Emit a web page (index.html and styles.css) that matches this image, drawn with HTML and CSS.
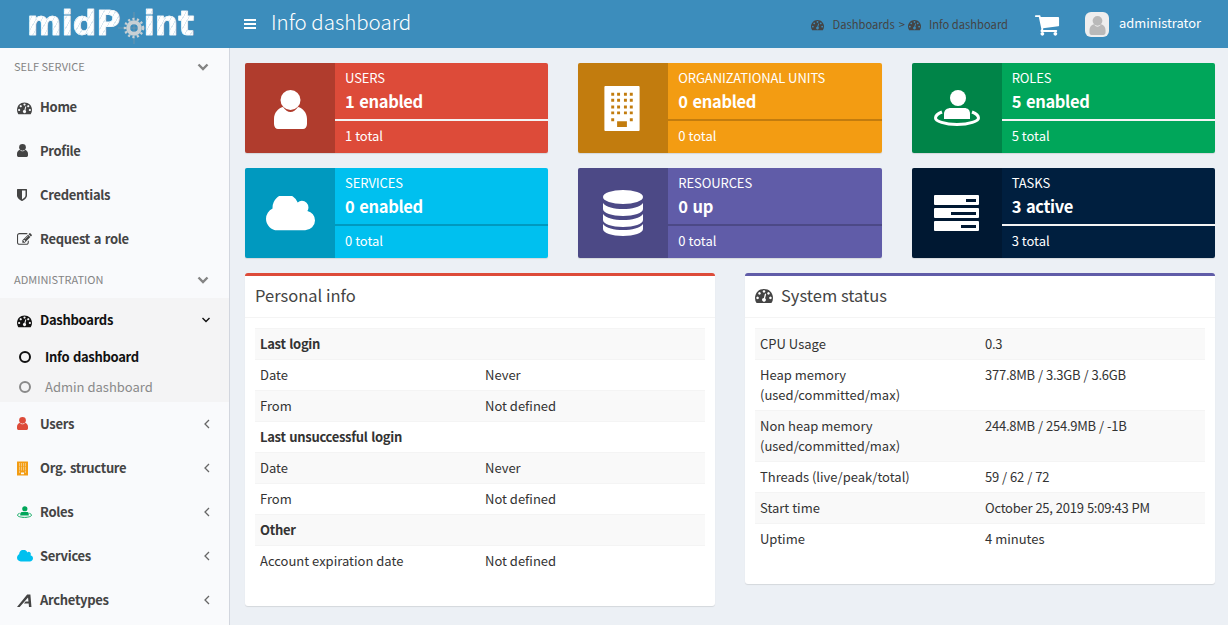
FILE: index.html
```html
<!DOCTYPE html>
<html lang="en">
<head>
<meta charset="utf-8">
<title>midPoint - Info dashboard</title>
<link rel="stylesheet" href="styles.css">
</head>
<body>
<svg class="defs" aria-hidden="true">
  <symbol id="i-gauge" viewBox="0 0 1792 1792"><path fill-rule="evenodd" d="M384 1184q0 53-37.5 90.5t-90.5 37.5-90.5-37.5-37.5-90.5 37.5-90.5 90.5-37.5 90.5 37.5 37.5 90.5zm192-448q0 53-37.5 90.5t-90.5 37.5-90.5-37.5-37.5-90.5 37.5-90.5 90.5-37.5 90.5 37.5 37.5 90.5zm428 481l101-382q6-26-7.5-48.5t-38.5-29.5-48 6.5-30 39.5l-101 382q-60 5-107 43.5t-63 98.5q-20 77 20 146t117 89 146-20 89-117q16-60-6-117t-72-91zm660-33q0 53-37.5 90.5t-90.5 37.5-90.5-37.5-37.5-90.5 37.5-90.5 90.5-37.5 90.5 37.5 37.5 90.5zm-640-640q0 53-37.5 90.5t-90.5 37.5-90.5-37.5-37.5-90.5 37.5-90.5 90.5-37.5 90.5 37.5 37.5 90.5zm448 192q0 53-37.5 90.5t-90.5 37.5-90.5-37.5-37.5-90.5 37.5-90.5 90.5-37.5 90.5 37.5 37.5 90.5zm320 448q0 261-141 483-19 29-54 29h-1402q-35 0-54-29-141-221-141-483 0-182 71-348t191-286 286-191 348-71 348 71 286 191 191 286 71 348z"/></symbol>
  <symbol id="i-person" viewBox="0 0 33 39"><circle cx="16.500" cy="10" r="10"/><path d="M0 34V29C0 23 4 18 9 17c2 3 5 5 7.500 5s5.500-2 7.500-5c5 1 9 6 9 12v5c0 3-2 5-4 5H4c-2 0-4-2-4-5z"/></symbol>
  <symbol id="i-shield" viewBox="256 128 1280 1536"><path fill-rule="evenodd" d="M1344 960v-640h-448v1137q119-63 213-137 235-184 235-360zm192-768v768q0 86-33.5 170.5t-83 150-118 127.5-126.5 103-121 77.5-89.5 49.5-42.5 20q-12 6-26 6t-26-6q-16-7-42.5-20t-89.5-49.5-121-77.5-126.5-103-118-127.5-83-150-33.5-170.5v-768q0-26 19-45t45-19h1152q26 0 45 19t19 45z"/></symbol>
  <symbol id="i-edit" viewBox="0 0 1792 1792"><path d="M888 1184l116-116-152-152-116 116v56h96v96h56zm440-720q-16-16-33 1l-350 350q-17 17-1 33t33-1l350-350q17-17 1-33zm80 594v190q0 119-84.5 203.5t-203.5 84.5h-832q-119 0-203.5-84.5t-84.5-203.5v-832q0-119 84.5-203.5t203.5-84.5h832q63 0 117 25 15 7 18 23 3 17-9 29l-49 49q-14 14-32 8-23-6-45-6h-832q-66 0-113 47t-47 113v832q0 66 47 113t113 47h832q66 0 113-47t47-113v-126q0-13 9-22l64-64q15-15 35-7t20 29zm-96-738l288 288-672 672h-288v-288zm444 132l-92 92-288-288 92-92q28-28 68-28t68 28l152 152q28 28 28 68t-28 68z"/></symbol>
  <symbol id="i-cart" viewBox="0 128 1792 1536"><path d="M704 1536q0 52-38 90t-90 38-90-38-38-90 38-90 90-38 90 38 38 90zm896 0q0 52-38 90t-90 38-90-38-38-90 38-90 90-38 90 38 38 90zm128-1088v512q0 24-16.5 42.5t-40.5 21.5l-1044 122q13 60 13 70 0 16-24 64h920q26 0 45 19t19 45-19 45-45 19h-1024q-26 0-45-19t-19-45q0-11 8-31.5t16-36 21.5-40 15.5-29.5l-177-823h-204q-26 0-45-19t-19-45 19-45 45-19h256q16 0 28.5 6.5t19.5 15.5 13 24.5 8 26 5.5 29.5 4.5 26h1201q26 0 45 19t19 45z"/></symbol>
  <symbol id="i-cloud" viewBox="0 256 1920 1312"><path d="M1920 1184q0 159-112.5 271.5t-271.5 112.5h-1088q-185 0-316.5-131.5t-131.5-316.5q0-132 71-241.5t187-163.5q-2-28-2-43 0-212 150-362t362-150q158 0 286.5 88t187.5 230q70-62 166-62 106 0 181 75t75 181q0 75-41 138 129 30 213 134.5t84 239.5z"/></symbol>
  <symbol id="i-building" viewBox="0 0 36 46"><path fill-rule="evenodd" d="M1 0h34a1 1 0 0 1 1 1v44a1 1 0 0 1-1 1H1a1 1 0 0 1-1-1V1a1 1 0 0 1 1-1zM7 7v3h3V7zm6 0v3h3V7zm7 0v3h3V7zm6 0v3h3V7zM7 13v3h3v-3zm6 0v3h3v-3zm7 0v3h3v-3zm6 0v3h3v-3zM7 20v3h3v-3zm6 0v3h3v-3zm7 0v3h3v-3zm6 0v3h3v-3zM7 26v3h3v-3zm6 0v3h3v-3zm7 0v3h3v-3zm6 0v3h3v-3zM7 33v3h3v-3zm19 0v3h3v-3zM13 36v6h10v-6z"/></symbol>
  <symbol id="i-role" viewBox="0 0 46 36"><circle cx="24" cy="8" r="8"/><path d="M10 29v-5c0-4 3-6 7-6h13c4 0 6 2 6 6v5z"/><path fill="none" stroke="currentColor" stroke-width="3" d="M8 22C3 24 1.500 26 1.500 28c0 3 9 6.500 21.500 6.500S44.500 31 44.500 28c0-2-1.500-4-6.500-6"/></symbol>
  <symbol id="i-db" viewBox="0 0 40 46"><ellipse cx="20" cy="7" rx="20" ry="7"/><path d="M0 13v6c0 4 9 7 20 7s20-3 20-7v-6c-3 4-11 6-20 6S3 17 0 13zM0 24v6c0 4 9 7 20 7s20-3 20-7v-6c-3 4-11 6-20 6S3 28 0 24zM0 34v5c0 4 9 7 20 7s20-3 20-7v-5c-3 4-11 6-20 6S3 38 0 34z"/></symbol>
  <symbol id="i-tasks" viewBox="0 0 45 36"><path fill-rule="evenodd" d="M1 0h43a1 1 0 0 1 1 1v8a1 1 0 0 1-1 1H1a1 1 0 0 1-1-1V1a1 1 0 0 1 1-1zm31 4v3h10V4zM1 13h43a1 1 0 0 1 1 1v8a1 1 0 0 1-1 1H1a1 1 0 0 1-1-1v-8a1 1 0 0 1 1-1zm16 4v3h25v-3zM1 26h43a1 1 0 0 1 1 1v8a1 1 0 0 1-1 1H1a1 1 0 0 1-1-1v-8a1 1 0 0 1 1-1zm26 4v3h15v-3z"/></symbol>
  <symbol id="i-arch" viewBox="0 0 14 14"><path d="M0 13 9.500 1.500h3L13.500 13h-2.300l-.3-3.300H6.500l1.500-1.800h2.700l-.4-3.800L2.500 13z"/></symbol>
  <symbol id="i-gear" viewBox="0 0 36 36"><path d="M18 2v32M2 18h32" fill="none" stroke="#7f98a8" stroke-width=".7"/><circle cx="18" cy="18" r="9" fill="none" stroke="#c8d0d4" stroke-width="2.500" stroke-dasharray="2.200 2.300"/><circle cx="18" cy="18" r="5.800" fill="none" stroke="#c8d0d4" stroke-width="4"/></symbol>
</svg>

<header class="topbar">
  <div class="brand"><div class="logo"><span class="logo-text">midP</span><svg class="logo-gear"><use href="#i-gear"/></svg><span class="logo-text">int</span></div></div>
  <div class="bars" aria-label="Toggle menu"><span></span><span></span><span></span></div>
  <h1 class="page-title">Info dashboard</h1>
  <nav class="crumbs">
    <svg class="ico-crumb"><use href="#i-gauge"/></svg><span class="crumb-text">Dashboards</span><span class="crumb-sep">&gt;</span>
    <svg class="ico-crumb"><use href="#i-gauge"/></svg><span class="crumb-text">Info dashboard</span>
  </nav>
  <svg class="ico-cart"><use href="#i-cart"/></svg>
  <div class="avatar"><svg class="ico-avatar"><use href="#i-person"/></svg></div>
  <span class="username">administrator</span>
</header>

<div class="layout">
  <aside class="sidebar">
    <div class="menu-head"><span>Self service</span><svg class="chev-big" viewBox="0 0 12 8"><path d="M1.500 1.500 6 6l4.500-4.500"/></svg></div>
    <a class="item"><span class="ico"><svg class="i14"><use href="#i-gauge"/></svg></span>Home</a>
    <a class="item"><span class="ico"><svg class="i-person"><use href="#i-person"/></svg></span>Profile</a>
    <a class="item"><span class="ico"><svg class="i-shield"><use href="#i-shield"/></svg></span>Credentials</a>
    <a class="item"><span class="ico"><svg class="i14"><use href="#i-edit"/></svg></span>Request a role</a>
    <div class="menu-head"><span>Administration</span><svg class="chev-big" viewBox="0 0 12 8"><path d="M1.500 1.500 6 6l4.500-4.500"/></svg></div>
    <div class="group">
      <a class="item item-open"><span class="ico"><svg class="i14"><use href="#i-gauge"/></svg></span>Dashboards<svg class="chev-down" viewBox="0 0 10 6"><path d="M1.500 1 5 4.500 8.500 1"/></svg></a>
      <a class="sub sub-active"><span class="ring"></span>Info dashboard</a>
      <a class="sub"><span class="ring"></span>Admin dashboard</a>
    </div>
    <a class="item"><span class="ico c-red"><svg class="i-person"><use href="#i-person"/></svg></span>Users<svg class="chev-left" viewBox="0 0 6 10"><path d="M5 1 1 5l4 4"/></svg></a>
    <a class="item"><span class="ico c-orange"><svg class="i-org"><use href="#i-building"/></svg></span>Org. structure<svg class="chev-left" viewBox="0 0 6 10"><path d="M5 1 1 5l4 4"/></svg></a>
    <a class="item"><span class="ico c-green"><svg class="i-role"><use href="#i-role"/></svg></span>Roles<svg class="chev-left" viewBox="0 0 6 10"><path d="M5 1 1 5l4 4"/></svg></a>
    <a class="item"><span class="ico c-cyan"><svg class="i-cloud"><use href="#i-cloud"/></svg></span>Services<svg class="chev-left" viewBox="0 0 6 10"><path d="M5 1 1 5l4 4"/></svg></a>
    <a class="item"><span class="ico"><svg class="i14"><use href="#i-arch"/></svg></span>Archetypes<svg class="chev-left" viewBox="0 0 6 10"><path d="M5 1 1 5l4 4"/></svg></a>
  </aside>

  <main class="content">
    <section class="cards">
      <article class="card bg-red line-light">
        <div class="card-icon"><svg class="big-user"><use href="#i-person"/></svg></div>
        <div class="card-body"><div class="card-label">Users</div><div class="card-num">1 enabled</div><div class="card-line"></div><div class="card-total">1 total</div></div>
      </article>
      <article class="card bg-orange">
        <div class="card-icon"><svg class="big-org"><use href="#i-building"/></svg></div>
        <div class="card-body"><div class="card-label">Organizational units</div><div class="card-num">0 enabled</div><div class="card-line"></div><div class="card-total">0 total</div></div>
      </article>
      <article class="card bg-green line-light">
        <div class="card-icon"><svg class="big-role"><use href="#i-role"/></svg></div>
        <div class="card-body"><div class="card-label">Roles</div><div class="card-num">5 enabled</div><div class="card-line"></div><div class="card-total">5 total</div></div>
      </article>
      <article class="card bg-cyan">
        <div class="card-icon"><svg class="big-cloud"><use href="#i-cloud"/></svg></div>
        <div class="card-body"><div class="card-label">Services</div><div class="card-num">0 enabled</div><div class="card-line"></div><div class="card-total">0 total</div></div>
      </article>
      <article class="card bg-purple">
        <div class="card-icon"><svg class="big-db"><use href="#i-db"/></svg></div>
        <div class="card-body"><div class="card-label">Resources</div><div class="card-num">0 up</div><div class="card-line"></div><div class="card-total">0 total</div></div>
      </article>
      <article class="card bg-navy line-light">
        <div class="card-icon"><svg class="big-tasks"><use href="#i-tasks"/></svg></div>
        <div class="card-body"><div class="card-label">Tasks</div><div class="card-num">3 active</div><div class="card-line"></div><div class="card-total">3 total</div></div>
      </article>
    </section>

    <section class="panels">
      <article class="panel panel-red">
        <h2 class="panel-head">Personal info</h2>
        <div class="panel-body">
          <table class="info">
            <tr><th colspan="2">Last login</th></tr>
            <tr><td>Date</td><td>Never</td></tr>
            <tr><td>From</td><td>Not defined</td></tr>
            <tr><th colspan="2">Last unsuccessful login</th></tr>
            <tr><td>Date</td><td>Never</td></tr>
            <tr><td>From</td><td>Not defined</td></tr>
            <tr><th colspan="2">Other</th></tr>
            <tr><td>Account expiration date</td><td>Not defined</td></tr>
          </table>
        </div>
      </article>
      <article class="panel panel-purple">
        <h2 class="panel-head"><svg class="ico-head"><use href="#i-gauge"/></svg>System status</h2>
        <div class="panel-body">
          <table class="info">
            <tr><td>CPU Usage</td><td class="num">0.3</td></tr>
            <tr><td>Heap memory<br>(used/committed/max)</td><td class="num">377.8MB / 3.3GB / 3.6GB</td></tr>
            <tr><td>Non heap memory<br>(used/committed/max)</td><td class="num">244.8MB / 254.9MB / -1B</td></tr>
            <tr><td>Threads (live/peak/total)</td><td class="num">59 / 62 / 72</td></tr>
            <tr><td>Start time</td><td class="num">October 25, 2019 5:09:43 PM</td></tr>
            <tr><td>Uptime</td><td>4 minutes</td></tr>
          </table>
        </div>
      </article>
    </section>
  </main>
</div>
</body>
</html>
```
FILE: styles.css
```css
* { box-sizing: border-box; }
html, body { margin: 0; height: 625px; overflow: hidden; }
body {
  font-family: "Noto Sans CJK SC", "Noto Sans", sans-serif;
  font-size: 13px;
  line-height: 20px;
  color: #333;
  background: #ecf0f5;
}
.defs { position: absolute; width: 0; height: 0; }
svg { fill: currentColor; display: block; }

/* top bar */
.topbar { height: 48px; background: #3c8dbc; display: flex; align-items: center; color: #fff; }
.brand { width: 230px; padding-left: 27px; flex: none; }
.logo {
  display: flex; align-items: center; height: 36px; margin-top: -1px;
  font-family: "DejaVu Sans", sans-serif; font-weight: 700; font-size: 33px; line-height: 36px;
}
.logo-text {
  color: transparent;
  background: repeating-linear-gradient(120deg, #fff 0 4px, #dbe8f0 4px 5px);
  -webkit-background-clip: text; background-clip: text;
  -webkit-text-stroke: .6px #f4f8fa;
}
.logo-gear { width: 36px; height: 36px; margin: 8px -8px 0 -5px; flex: none; }
.bars { width: 12px; margin-left: 14px; flex: none; display: flex; flex-direction: column; gap: 2px; }
.bars span { height: 2px; background: #fff; }
.page-title { margin: -6px 0 0 15px; font-size: 20.500px; line-height: 30px; font-weight: 300; flex: 1; }
.crumbs { display: flex; align-items: center; color: #444; font-size: 11.200px; }
.ico-crumb { width: 13px; height: 13px; }
.crumb-text { margin-left: 8px; }
.crumb-sep { margin: 0 3px 0 4px; }
.ico-cart { width: 26px; height: 23px; margin-left: 26px; }
.avatar { width: 24px; height: 25px; border-radius: 6px; background: #eee; margin-left: 25px; display: flex; justify-content: center; align-items: flex-end; color: #b9b9b9; padding-bottom: 2px; }
.ico-avatar { width: 17px; height: 19px; }
.username { margin: -3px 27px 0 10px; font-size: 12.900px; }

/* layout */
.layout { display: flex; height: 577px; }
.sidebar { width: 230px; flex: none; background: #f9fafc; border-right: 1px solid #d2d6de; color: #444; }
.menu-head { height: 37px; padding: 0 20px 0 14px; display: flex; justify-content: space-between; align-items: center; font-size: 11px; text-transform: uppercase; color: #848484; }
.menu-head span { margin-top: -1px; }
.chev-big { width: 12px; height: 8px; fill: none; stroke: #848484; stroke-width: 2.400; }
.item { height: 44px; display: flex; align-items: center; padding: 0 17px; font-weight: 700; letter-spacing: -.3px; word-spacing: 1px; color: #444; }
.ico { width: 23px; flex: none; display: flex; align-items: center; }
.i14 { width: 15px; height: 15px; }
.i-person { width: 11px; height: 13px; margin-top: -1px; }
.i-shield { width: 10px; height: 12px; margin-top: -1px; }
.i-org { width: 11px; height: 15px; }
.i-role { width: 15px; height: 12px; }
.i-cloud { width: 16px; height: 12px; }
.chev-down { width: 10px; height: 6px; margin-left: auto; margin-right: 1px; fill: none; stroke: #111; stroke-width: 1.400; }
.chev-left { width: 6px; height: 10px; margin-left: auto; margin-right: 2px; fill: none; stroke: #666; stroke-width: 1.300; }
.group { background: #f4f4f5; height: 104px; }
.item-open { color: #111; }
.item-open .ico { color: #111; }
.sub { height: 30px; display: flex; align-items: center; padding-left: 19px; color: #8a8a8a; }
.sub-active { color: #111; font-weight: 700; letter-spacing: -.3px; word-spacing: 1px; }
.ring { width: 12px; height: 12px; border-radius: 50%; border: 2px solid currentColor; margin-right: 14px; flex: none; }
.c-red { color: #dd4b39; }
.c-orange { color: #f39c12; }
.c-green { color: #00a65a; }
.c-cyan { color: #00c0ef; }

/* content */
.content { flex: 1; padding: 15px 13px 0 15px; min-width: 0; }
.cards { display: grid; grid-template-columns: repeat(3, 1fr); column-gap: 30px; row-gap: 15px; }
.card { height: 90px; display: flex; border-radius: 2px; overflow: hidden; color: #fff; box-shadow: 0 1px 1px rgba(0,0,0,.1); }
.card-icon { width: 90px; flex: none; display: flex; align-items: center; justify-content: center; background: rgba(0,0,0,.2); }
.card-body { flex: 1; padding-top: 5px; min-width: 0; }
.card-label { padding-left: 10px; line-height: 20px; text-transform: uppercase; letter-spacing: -.1px; }
.card-num { padding-left: 10px; font-size: 16.500px; line-height: 26px; font-weight: 700; letter-spacing: -.35px; word-spacing: 1.500px; margin-bottom: 1px; }
.card-line { height: 2px; margin-top: 5px; background: rgba(0,0,0,.2); }
.line-light .card-line { background: #f4f4f4; }
.card-total { padding-left: 10px; margin-top: 5px; }
.bg-red { background: #dd4b39; }
.bg-orange { background: #f39c12; }
.bg-green { background: #00a65a; }
.bg-cyan { background: #00c0ef; }
.bg-purple { background: #605ca8; }
.bg-navy { background: #001f3f; }
.big-user { width: 33px; height: 39px; margin-top: 2px; }
.big-org { width: 36px; height: 45px; margin-right: 3px; }
.big-role { width: 46px; height: 36px; }
.big-cloud { width: 49px; height: 35px; }
.big-db { width: 40px; height: 46px; }
.big-tasks { width: 45px; height: 36px; }

/* panels */
.panels { display: grid; grid-template-columns: 1fr 1fr; column-gap: 30px; margin-top: 15px; align-items: start; }
.panel { background: #fff; border-top: 3px solid #d2d6de; border-radius: 3px; box-shadow: 0 1px 1px rgba(0,0,0,.1); }
.panel-red { border-top-color: #dd4b39; }
.panel-purple { border-top-color: #605ca8; }
.panel-head { margin: 0; height: 42px; padding: 0 10px 4px; border-bottom: 1px solid #f4f4f4; display: flex; align-items: center; font-size: 16.500px; font-weight: 400; color: #444; line-height: 20px; }
.ico-head { width: 18px; height: 18px; margin-right: 8px; }
.panel-body { padding: 10px 10px 30px; }
.info { width: 100%; border-collapse: collapse; table-layout: fixed; color: #333; }
.info th, .info td { padding: 5px; border-top: 1px solid #f4f4f4; text-align: left; vertical-align: top; line-height: 20px; }
.info th { letter-spacing: -.3px; word-spacing: 1px; }
.info tr:nth-child(odd) { background: #f9f9f9; }
.info .num { letter-spacing: -.25px; word-spacing: .5px; }
```
